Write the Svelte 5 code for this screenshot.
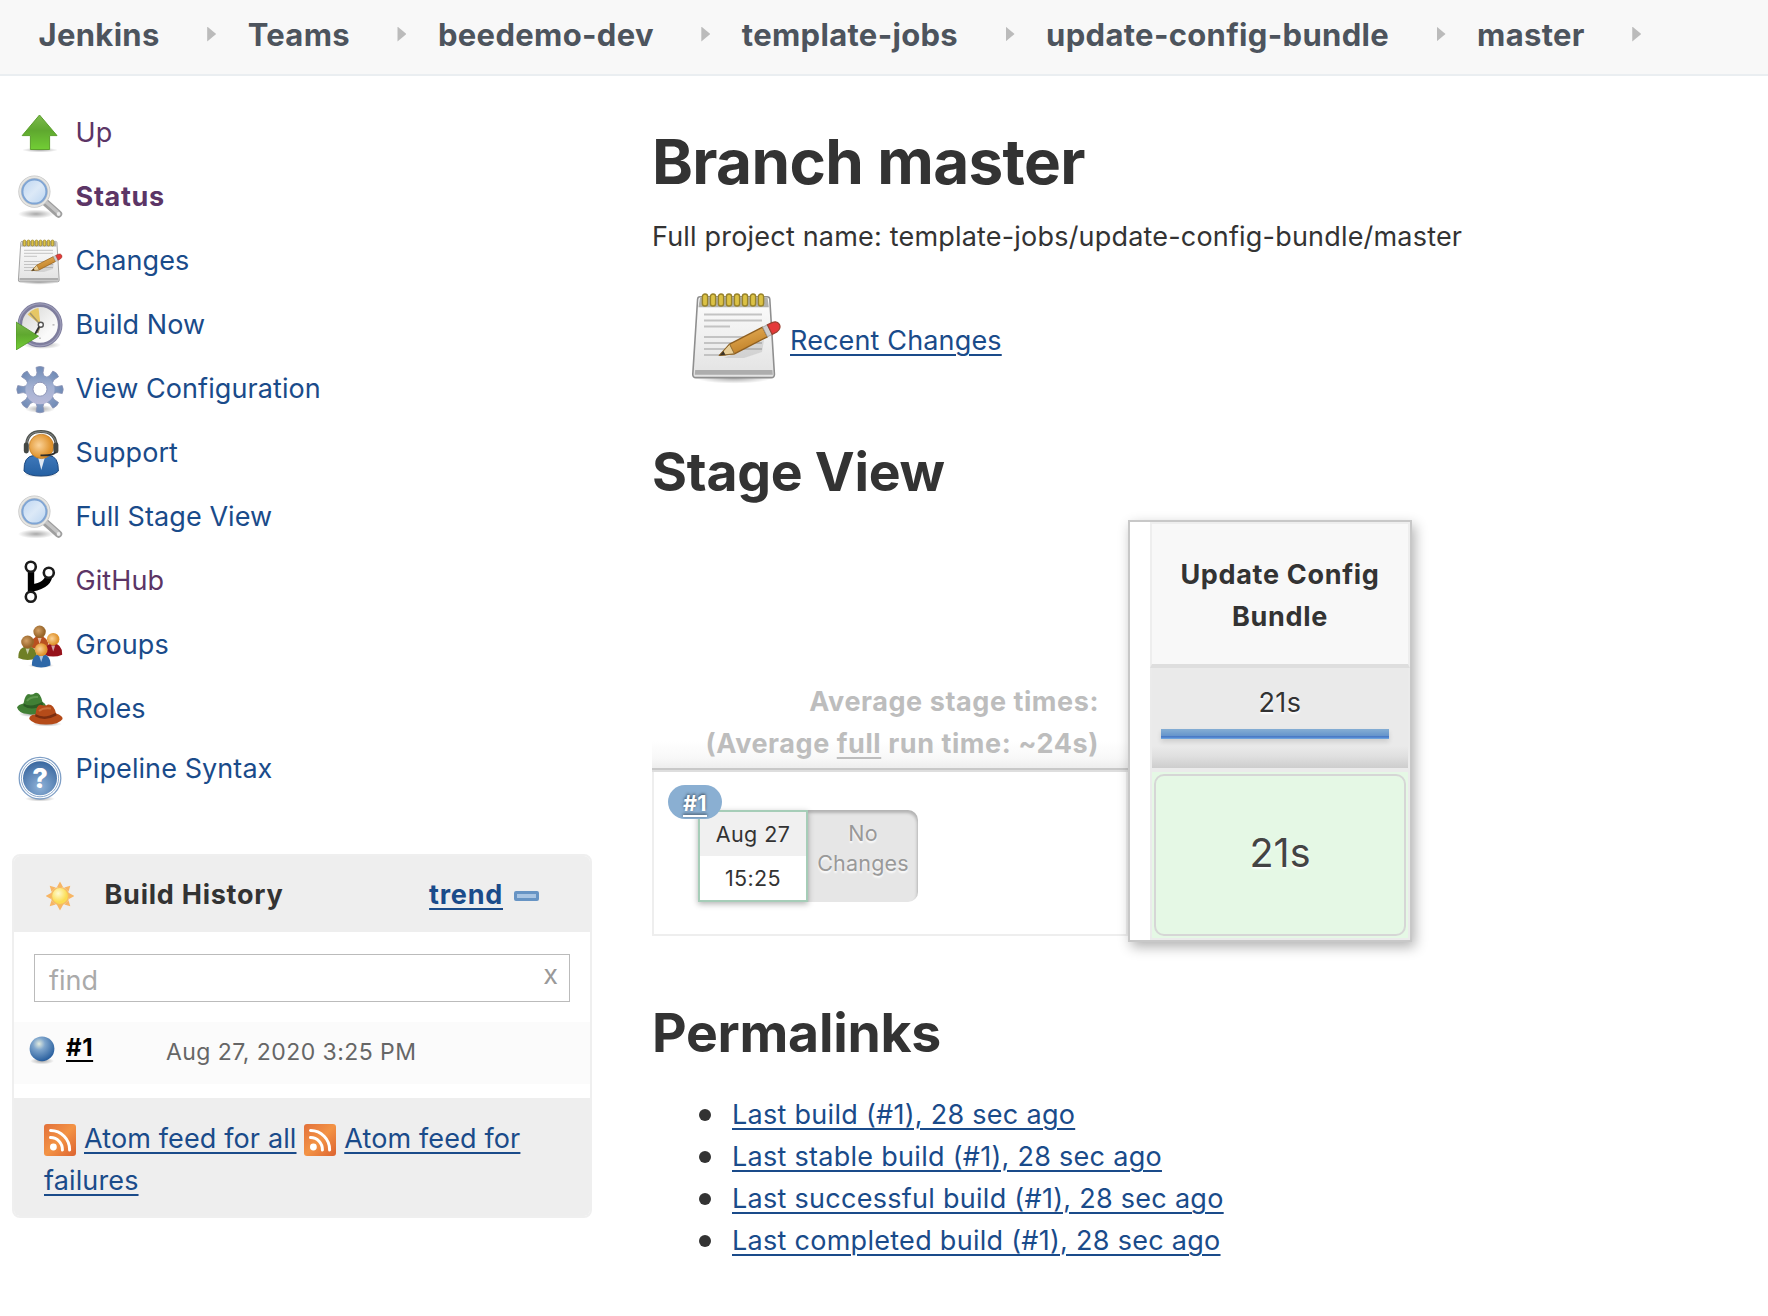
<script>
  const crumbs = ['Jenkins', 'Teams', 'beedemo-dev', 'template-jobs', 'update-config-bundle', 'master'];
  const tasks = [
    { label: 'Up', icon: 'up', visited: true },
    { label: 'Status', icon: 'search', visited: true, current: true },
    { label: 'Changes', icon: 'notepad' },
    { label: 'Build Now', icon: 'clock' },
    { label: 'View Configuration', icon: 'gear' },
    { label: 'Support', icon: 'support' },
    { label: 'Full Stage View', icon: 'search' },
    { label: 'GitHub', icon: 'git', visited: true },
    { label: 'Groups', icon: 'groups' },
    { label: 'Roles', icon: 'roles' },
    { label: 'Pipeline Syntax', icon: 'help', last: true }
  ];
  const permalinks = [
    'Last build (#1), 28 sec ago',
    'Last stable build (#1), 28 sec ago',
    'Last successful build (#1), 28 sec ago',
    'Last completed build (#1), 28 sec ago'
  ];
  const teeth = [0, 45, 90, 135, 180, 225, 270, 315];
  const rays = [0, 45, 90, 135, 180, 225, 270, 315];
  const rings = [8.5, 12.5, 16.5, 20.5, 24.5, 28.5, 32.5, 36.5];
</script>

{#snippet person(x, y, r, skin, shirt)}
  <path d="M{x - r * 1.45} {y + r * 2.5}Q{x - r * 1.5} {y + r * 0.75} {x} {y + r * 0.7}Q{x + r * 1.5} {y + r * 0.75} {x + r * 1.45} {y + r * 2.5}Q{x} {y + r * 3.1} {x - r * 1.45} {y + r * 2.5}Z" fill={shirt} />
  <path d="M{x - 2} {y + r}h4l-2 6Z" fill="#fff" opacity=".6" />
  <circle cx={x} cy={y} {r} fill="url(#{skin})" />
{/snippet}

{#snippet icon(name)}
  <svg class="icon" viewBox="0 0 48 48" aria-hidden="true">
    {#if name === 'up'}
      <ellipse cx="24" cy="40" rx="18" ry="2.4" fill="url(#shade)" />
      <path d="M23.5 5L41 25.6H33.6V39.5H14.4V25.6H6.2Z" fill="url(#green)" stroke="#5c9f2d" stroke-width="1" stroke-linejoin="round" />
    {:else if name === 'search'}
      <ellipse cx="20" cy="40" rx="18" ry="4.5" fill="url(#shade)" />
      <path d="M29 28L42.5 40" stroke="#9f9f9f" stroke-width="7.4" stroke-linecap="round" />
      <path d="M30 28L42 38.5" stroke="#c4c4c4" stroke-width="3.5" stroke-linecap="round" />
      <circle cx="42.6" cy="40" r="1.9" fill="#ececec" />
      <circle cx="18.4" cy="17.6" r="14.4" fill="url(#lens)" stroke="#c6c6c6" stroke-width="3.4" />
      <circle cx="18.4" cy="17.6" r="14.4" fill="none" stroke="#e6e6e3" stroke-width="1.8" />
      <circle cx="18.4" cy="17.6" r="12" fill="none" stroke="#7fa5d4" stroke-width="2" />
    {:else if name === 'notepad'}
      <ellipse cx="23" cy="44" rx="19" ry="2.8" fill="url(#shade)" />
      <path d="M6 3.4H39.6Q40.8 3.4 40.9 4.6L43.2 42Q43.3 43.8 41.6 43.8H4Q2.3 43.8 2.4 42L4.8 4.6Q4.9 3.4 6 3.4Z" fill="url(#paper)" stroke="#8f8f8f" stroke-width=".8" />
      <path d="M6 3.8H39.8L40.4 8.6H5.2Z" fill="#b0b0ac" />
      <path d="M3.6 40H42.2L42.4 42.4H3.4Z" fill="#adadad" />
      <path d="M8 12.3H37M8 15.3H37M8 18.3H21M8 23.5H37M8 26.5H37M8 29.5H37M8 32.5H19" stroke="#c3c3c3" stroke-width="1" />
      {#each rings as x}
        <rect x={x - 1.3} y="2" width="2.6" height="6" rx="1.3" fill="#dcc245" stroke="#98832a" stroke-width=".7" />
      {/each}
      <path d="M18 34L38 25L37 31L28 34Z" fill="#777" opacity=".2" />
      <path d="M15.7 32.7L20.8 27.1L37.3 18.6L39.7 23.4L23.2 31.9Z" fill="url(#wood)" stroke="#8f5f20" stroke-width=".7" stroke-linejoin="round" />
      <path d="M15.7 32.7L20.8 27.1L23.2 31.9Z" fill="#e9cf99" stroke="#8f6a30" stroke-width=".5" />
      <path d="M15.7 32.7L17.7 30.5L18.7 32.4Z" fill="#3c3325" />
      <path d="M37.3 18.6L39.7 17.4L42.1 22.2L39.7 23.4Z" fill="#cfcfcf" stroke="#999" stroke-width=".4" />
      <path d="M39.7 17.4L42 16.3Q44.6 15.2 45.7 17.2T44.4 21L42.1 22.2Z" fill="#e43a3a" stroke="#9a4030" stroke-width=".6" />
    {:else if name === 'clock'}
      <ellipse cx="26" cy="43" rx="19" ry="4" fill="url(#shade)" />
      <circle cx="24" cy="22.8" r="20.2" fill="url(#face)" stroke="#7e7d9d" stroke-width="4.6" />
      <circle cx="24" cy="22.8" r="21" fill="none" stroke="#9c9cb8" stroke-width="1.2" />
      <path d="M24.5 22.8L11.5 12.5Q16 7 22.5 6Z" fill="#e6c765" />
      <path d="M14 11L24.5 22.8L21.5 31" fill="none" stroke="#a2946a" stroke-width="1.6" />
      <circle cx="24.8" cy="22.8" r="2.5" fill="#fff" stroke="#555" stroke-width="1.4" />
      <path d="M23 25L18 34" stroke="#333" stroke-width="1.8" />
      <path d="M24 35.5V37M36.5 22.8H38.5" stroke="#aaa" stroke-width="1.3" />
      <path d="M0 20L22.5 34.2L0 48Z" fill="url(#green)" stroke="#4f9327" stroke-width=".8" />
    {:else if name === 'gear'}
      <ellipse cx="24" cy="43" rx="15" ry="4" fill="url(#shade)" />
      <g fill="url(#steel)" stroke="#8b93b5" stroke-width=".8">
        {#each teeth as a}
          <path d="M19.4 12L21 6.8L20 1.4Q24 -.6 28 1.4L27 6.8L28.6 12Z" transform="rotate({a} 24 23.6)" />
        {/each}
      </g>
      <circle cx="24" cy="23.6" r="14.6" fill="url(#steel)" />
      <circle cx="24" cy="23.2" r="7" fill="#fff" stroke="#8f96b8" stroke-width="1" />
    {:else if name === 'support'}
      <ellipse cx="25" cy="44.6" rx="17" ry="3" fill="url(#shade)" />
      <path d="M8 41Q7.5 26 18 25.5H33Q42.5 26 42.4 41Q38 46 25 46T8 41Z" fill="url(#blue)" stroke="#1f4a80" stroke-width="1" />
      <path d="M22 27H29L25.3 40Z" fill="#dfe8f3" />
      <circle cx="25.4" cy="16.4" r="12.2" fill="url(#skin)" stroke="#bc7722" stroke-width=".7" />
      <path d="M10.6 17Q10 1.6 25 1.6T40.4 17" fill="none" stroke="#4e524f" stroke-width="3" />
      <path d="M10.6 17Q10 1.6 25 1.6T40.4 17" fill="none" stroke="#8f9390" stroke-width=".8" />
      <rect x="7.8" y="12.4" width="5" height="11" rx="2.4" fill="#444845" />
      <rect x="37.4" y="12.4" width="5" height="11" rx="2.4" fill="#444845" />
      <path d="M39.6 22Q37.5 25.8 24.5 25.4" fill="none" stroke="#2e2e2e" stroke-width="1.8" />
    {:else if name === 'git'}
      <path d="M15 11V36" stroke="#000" stroke-width="6.4" />
      <path d="M33 16Q33 27 16 30" fill="none" stroke="#000" stroke-width="7" />
      <g fill="#fff" stroke="#1b1b1b" stroke-width="2.6">
        <circle cx="14.8" cy="8.8" r="5" />
        <circle cx="32.8" cy="14.8" r="5" />
        <circle cx="14.8" cy="38.8" r="5" />
      </g>
    {:else if name === 'groups'}
      <ellipse cx="25" cy="43.5" rx="13" ry="2.5" fill="url(#shade)" />
      {@render person(23.6, 9.8, 6.2, 'tan', '#b9501f')}
      {@render person(11.6, 20, 6.4, 'tan', '#6f7f25')}
      {@render person(37.2, 17.2, 6.2, 'skin', '#97121b')}
      {@render person(25.2, 27.6, 6.4, 'skin', '#2e68a8')}
    {:else if name === 'roles'}
      <ellipse cx="14" cy="28" rx="11" ry="3" fill="url(#shade)" />
      <ellipse cx="31" cy="38" rx="15" ry="2.6" fill="url(#shade)" />
      <path d="M1 21.5Q2 18.5 7.5 17.5Q9 8 13 8Q16 9.5 19 7Q24 5.5 26.5 16Q31 18 30 24Q22 30 12 28Q3 27.5 1 21.5Z" fill="#417f35" />
      <path d="M7.5 17.5Q15 22 26.4 16L27 19Q16 25.5 7.5 20Z" fill="#2c5c25" />
      <path d="M11 15Q14 10.5 22 11" fill="none" stroke="#5f994f" stroke-width="2" />
      <path d="M13.2 33Q13.5 28.5 19.5 28.5Q20 19.5 24.5 18.8Q28.5 20.6 32 18.4Q38 18 40 27.5Q46.8 29.5 46.6 33Q43 38.6 30 38.6T13.2 33Z" fill="#b54b19" />
      <path d="M19.4 28Q28 33.5 40 26.8L40.6 29.6Q29 36 19.2 30.6Z" fill="#7b2e10" />
      <path d="M23 25Q27 21.5 35 22.5" fill="none" stroke="#cc6f3c" stroke-width="2" />
    {:else if name === 'help'}
      <ellipse cx="24" cy="44.8" rx="15" ry="2.8" fill="url(#shade)" />
      <circle cx="24" cy="24.2" r="20.8" fill="#fff" stroke="#7f9fc6" stroke-width="1.3" />
      <circle cx="24" cy="24.2" r="18.6" fill="none" stroke="#8daacd" stroke-width="1" />
      <circle cx="24" cy="24.2" r="17" fill="url(#ball)" />
      <text class="mark" x="24" y="34.4" text-anchor="middle">?</text>
    {/if}
  </svg>
{/snippet}

{#snippet rss()}
  <svg class="rss" viewBox="0 0 32 32" aria-hidden="true">
    <rect width="32" height="32" rx="3" fill="url(#orange)" />
    <circle cx="9.4" cy="23" r="3.4" fill="#fff" />
    <path d="M6.5 13.6A12 12 0 0 1 18.4 26M6.5 6.6A19 19 0 0 1 25.6 26" fill="none" stroke="#fff" stroke-width="3" stroke-linecap="round" />
  </svg>
{/snippet}

<svg class="defs" aria-hidden="true">
  <defs>
    <radialGradient id="shade"><stop offset="0" stop-color="#000" stop-opacity=".34" /><stop offset="1" stop-color="#000" stop-opacity="0" /></radialGradient>
    <linearGradient id="green" x2="0" y2="1"><stop offset="0" stop-color="#7db94d" /><stop offset=".45" stop-color="#5fa82f" /><stop offset="1" stop-color="#72ce35" /></linearGradient>
    <linearGradient id="lens" x2="1" y2="1"><stop offset="0" stop-color="#b6d1f0" /><stop offset=".5" stop-color="#dce9f7" /><stop offset="1" stop-color="#b3d0ef" /></linearGradient>
    <linearGradient id="paper" x2="0" y2="1"><stop offset="0" stop-color="#fdfdfd" /><stop offset="1" stop-color="#e2e2e2" /></linearGradient>
    <linearGradient id="wood" x2=".5" y2="1"><stop offset="0" stop-color="#eeb860" /><stop offset="1" stop-color="#bd7d25" /></linearGradient>
    <linearGradient id="face" x2="1" y2="1"><stop offset="0" stop-color="#d3d3d0" /><stop offset=".7" stop-color="#fafafa" /></linearGradient>
    <linearGradient id="steel" gradientUnits="userSpaceOnUse" x1="24" y1="0" x2="24" y2="47"><stop offset="0" stop-color="#6f8ab5" /><stop offset=".45" stop-color="#a3b1d2" /><stop offset="1" stop-color="#c5bfdd" /></linearGradient>
    <linearGradient id="blue" x2="0" y2="1"><stop offset="0" stop-color="#3f78ba" /><stop offset="1" stop-color="#2560a2" /></linearGradient>
    <radialGradient id="skin" cx=".4" cy=".45"><stop offset="0" stop-color="#fbd399" /><stop offset="1" stop-color="#e0932d" /></radialGradient>
    <radialGradient id="tan" cx=".4" cy=".4"><stop offset="0" stop-color="#d3a065" /><stop offset="1" stop-color="#99662a" /></radialGradient>
    <radialGradient id="ball" cy=".75" r=".75"><stop offset="0" stop-color="#8fb2d8" /><stop offset="1" stop-color="#39679f" /></radialGradient>
    <radialGradient id="status" cx=".38" cy=".3" r=".7"><stop offset="0" stop-color="#e3ecdf" /><stop offset=".35" stop-color="#7ea5cc" /><stop offset="1" stop-color="#2a609f" /></radialGradient>
    <radialGradient id="sun" cx=".4" cy=".35"><stop offset="0" stop-color="#fffbd0" /><stop offset="1" stop-color="#fbdc52" /></radialGradient>
    <linearGradient id="orange" x2="1" y2="1"><stop offset="0" stop-color="#e2703a" /><stop offset=".5" stop-color="#f39345" /><stop offset="1" stop-color="#dc6330" /></linearGradient>
  </defs>
</svg>

<header class="crumbs">
  {#each crumbs as crumb}
    <a href="#top">{crumb}</a><i class="arrow"></i>
  {/each}
</header>

<div class="page">
  <aside>
    <nav>
      {#each tasks as task}
        <a href="#task" class="task" class:visited={task.visited} class:current={task.current} class:last={task.last}>
          {@render icon(task.icon)}
          <span>{task.label}</span>
        </a>
      {/each}
    </nav>

    <section class="history">
      <div class="history-head">
        <svg class="sun" viewBox="0 0 28 30" aria-hidden="true">
          {#each rays as a}
            <path d="M11 6L14 .4L17 6Z" fill="#f7b564" transform="rotate({a} 14 15)" />
          {/each}
          <circle cx="14" cy="15" r="8.6" fill="url(#sun)" stroke="#f5bb62" stroke-width="1.4" />
        </svg>
        <strong>Build History</strong>
        <a href="#trend">trend</a>
        <i class="collapse"></i>
      </div>
      <div class="history-body">
        <div class="find"><span>find</span><b>x</b></div>
        <div class="build">
          <svg class="status" viewBox="0 0 28 30" aria-hidden="true">
            <ellipse cx="14" cy="26" rx="12" ry="3.4" fill="url(#shade)" />
            <circle cx="14" cy="13.8" r="12.4" fill="url(#status)" />
          </svg>
          <a href="#1">#1</a>
          <time>Aug 27, 2020 3:25 PM</time>
        </div>
      </div>
      <div class="feeds">
        {@render rss()}<a href="#all">Atom feed for all</a>
        {@render rss()}<a href="#failures">Atom feed for failures</a>
      </div>
    </section>
  </aside>

  <main>
    <h1>Branch master</h1>
    <p>Full project name: template-jobs/update-config-bundle/master</p>
    <div class="recent">
      {@render icon('notepad')}
      <a href="#changes">Recent Changes</a>
    </div>

    <h2>Stage View</h2>
    <div class="stage">
      <div class="runs">
        <div class="average">
          <div>Average stage times:</div>
          <div>(Average <u>full</u> run time: ~24s)</div>
        </div>
        <div class="run">
          <div class="when"><span>Aug 27</span><span>15:25</span><a class="badge" href="#1">#1</a></div>
          <div class="none">No<br />Changes</div>
        </div>
      </div>
      <div class="stage-col">
        <div class="stage-name">Update Config<br />Bundle</div>
        <div class="stage-avg">21s<i></i></div>
        <div class="stage-ok"><div>21s</div></div>
      </div>
    </div>

    <h2 class="links-title">Permalinks</h2>
    <ul>
      {#each permalinks as link}
        <li><a href="#build">{link}</a></li>
      {/each}
    </ul>
  </main>
</div>

<style>
  :global(body) {
    background: #fff;
    color: #333;
    font: 27px/42px Inter, "Liberation Sans", sans-serif;
    overflow: hidden;
  }
  a { color: #1a4b8a; text-underline-offset: 4px; text-decoration-thickness: 2px; }
  .defs { display: block; width: 0; height: 0; }

  .crumbs {
    box-sizing: border-box;
    height: 76px;
    padding: 0 0 5px 38.5px;
    display: flex;
    align-items: center;
    background: #f8f8f8;
    border-bottom: 2px solid #eaeef1;
  }
  .crumbs a {
    color: #4d545d;
    font-size: 31px;
    font-weight: 700;
    text-decoration: none;
    white-space: nowrap;
    letter-spacing: 0.32px;
  }
  .arrow {
    width: 9px;
    height: 15px;
    margin: -1px 31.5px 0 47.5px;
    background: #bbb;
    clip-path: polygon(0 0, 100% 50%, 0 100%);
  }

  .page { display: flex; }
  aside { width: 652px; }
  nav { padding: 34px 0 0 16px; }
  .task {
    display: flex;
    align-items: flex-start;
    gap: 11.5px;
    height: 64px;
    text-decoration: none;
    letter-spacing: .08px;
  }
  .task span { padding-top: 2px; }
  .visited { color: #5c3566; }
  .current { font-weight: 700; letter-spacing: .7px; }
  .last { height: 104px; }
  .last .icon { margin-top: 4px; }
  .last span { margin-top: -4px; }
  .icon { width: 48px; height: 48px; flex: none; }
  .mark { font: 800 27px Inter, sans-serif; fill: #fff; }

  .history {
    box-sizing: border-box;
    width: 580px;
    margin-left: 12px;
    border: 2px solid #efefef;
    border-radius: 8px;
    overflow: hidden;
  }
  .history-head {
    box-sizing: border-box;
    height: 76px;
    padding: 2px 51px 0 32px;
    display: flex;
    align-items: center;
    background: #eee;
    letter-spacing: .75px;
  }
  .history-head strong { margin-left: 30.5px; }
  .history-head a { margin-left: auto; font-weight: 700; }
  .sun { width: 28px; height: 30px; margin-top: 2px; }
  .collapse {
    box-sizing: border-box;
    width: 25px;
    height: 10px;
    margin: 2px 0 0 11px;
    border: 3px solid #6794c4;
    border-radius: 2px;
    background: #a9c5e3;
  }
  .history-body { height: 166px; padding-top: 22px; box-sizing: border-box; }
  .find {
    box-sizing: border-box;
    height: 48px;
    margin: 0 20px;
    padding: 0 11px 0 14px;
    display: flex;
    justify-content: space-between;
    border: 1px solid #bbb;
    color: #aaa;
  }
  .find span { padding-top: 5px; }
  .find b { font-weight: 400; color: #999; margin-top: -1px; }
  .build {
    height: 62px;
    margin-top: 20px;
    padding-left: 14px;
    display: flex;
    align-items: flex-start;
    background: #fbfbfb;
    font-size: 23px;
  }
  .status { width: 28px; height: 30px; margin-top: 13px; }
  .build a { width: 29px; margin: 5px 71px 0 10px; font-size: 24px; font-weight: 700; letter-spacing: .6px; color: #000; }
  .build time { color: #666; margin-top: 9px; letter-spacing: .44px; }
  .feeds {
    box-sizing: border-box;
    height: 118px;
    padding: 20px 30px 16px;
    background: #eee;
    letter-spacing: .13px;
  }
  .rss { width: 32px; height: 32px; margin-right: 8px; vertical-align: -8px; }

  main { flex: 1; padding-top: 49px; }
  h1, h2, p, ul { margin: 0; }
  h1 { font-size: 62px; line-height: 74px; letter-spacing: -.65px; }
  h2 { font-size: 53.5px; line-height: 64px; letter-spacing: -.25px; }
  p { margin-top: 17px; letter-spacing: .19px; }
  .recent { display: flex; align-items: center; gap: 6px; margin: 32px 0 54px 36px; letter-spacing: .15px; }
  .recent .icon { width: 96px; height: 96px; }
  .recent a { padding-top: 6px; }

  .stage { display: flex; align-items: flex-start; margin: 16px 0 59px; }
  .stage, .links-title { position: relative; }
  .runs { width: 476px; padding-top: 152px; }
  .average {
    box-sizing: border-box;
    height: 100px;
    padding: 9px 29px 0 0;
    border-bottom: 2px solid #dedede;
    background: linear-gradient(#fff 70%, #f8f8f8 88%, #ebebeb);
    box-shadow: inset 0 -2px 0 #c8c8c8;
    color: #bdbdbd;
    font-weight: 700;
    text-align: right;
    letter-spacing: .57px;
  }
  u { text-underline-offset: 4px; text-decoration-thickness: 2px; }
  .run {
    box-sizing: border-box;
    height: 164px;
    padding: 38px 0 0 44px;
    display: flex;
    border: solid #eee;
    border-width: 0 2px 2px;
    font-size: 21.5px;
    letter-spacing: .4px;
  }
  .when {
    position: relative;
    box-sizing: border-box;
    width: 110px;
    height: 92px;
    display: flex;
    flex-direction: column;
    border: 2px solid #a6cdb8;
    box-shadow: 0 2px 6px rgba(0, 0, 0, .3);
    text-align: center;
    line-height: 45px;
    z-index: 1;
  }
  .when span { height: 44px; background: #fff; }
  .when span:first-child { background: #f0f0f0; }
  .badge {
    position: absolute;
    left: -32px;
    top: -27px;
    width: 54px;
    height: 34px;
    border-radius: 17px;
    background: #8aafd2;
    color: #fff;
    font-weight: 700;
    font-size: 21.5px;
    line-height: 36px;
    text-shadow: 0 -1px 3px rgba(0, 0, 0, .6);
  }
  .none {
    box-sizing: border-box;
    width: 110px;
    height: 92px;
    padding-top: 8px;
    border-radius: 0 10px 10px 0;
    background: #e6e6e6;
    box-shadow: inset -1px 3px 3px rgba(0, 0, 0, .22);
    color: #999;
    line-height: 30px;
    letter-spacing: .2px;
    text-align: center;
    text-shadow: 0 2px 2px #fff;
  }

  .stage-col {
    box-sizing: border-box;
    width: 284px;
    height: 422px;
    padding-left: 20px;
    border: 2px solid #c8c8c8;
    box-shadow: 3px 5px 12px rgba(0, 0, 0, .3);
    background: #fff;
    text-align: center;
  }
  .stage-name {
    box-sizing: border-box;
    height: 146px;
    padding-top: 30px;
    border: 2px solid #eee;
    border-bottom: 4px solid #dedede;
    background: #f8f8f8;
    font-weight: 700;
    letter-spacing: .69px;
  }
  .stage-avg {
    box-sizing: border-box;
    height: 104px;
    padding: 14px 19px 0 9px;
    border: solid #ebebeb;
    border-width: 0 2px 4px;
    background: linear-gradient(#eaeaea 78%, #e0e0e0 88%, #cdcdcd);
    text-shadow: 0 2px 2px #fff;
    text-indent: 10px;
    letter-spacing: .5px;
  }
  .stage-avg i {
    display: block;
    height: 10px;
    margin-top: 5px;
    background: linear-gradient(#85aed4, #6594cb 70%, #3a6cc4 78%, #3a6cc4 84%, #6ea2dc 86%);
    box-shadow: 0 3px 5px rgba(0, 0, 0, .12);
  }
  .stage-ok {
    box-sizing: border-box;
    height: 168px;
    padding: 2px;
    border: solid #ebebeb;
    border-width: 0 2px 2px;
    background: #e5f8e5;
  }
  .stage-ok div {
    box-sizing: border-box;
    height: 162px;
    border: 2px solid #d6d6d6;
    border-radius: 10px;
    font-size: 39.5px;
    line-height: 154px;
    color: #444;
    text-shadow: 0 2px 2px #fff;
  }

  .links-title { margin-bottom: 29px; }
  ul { padding-left: 80px; list-style: none; letter-spacing: .28px; }
  li { display: flex; align-items: center; }
  li::before {
    content: "";
    width: 12px;
    height: 12px;
    margin: 0 21px 0 -33px;
    border-radius: 50%;
    background: #333;
  }
</style>
